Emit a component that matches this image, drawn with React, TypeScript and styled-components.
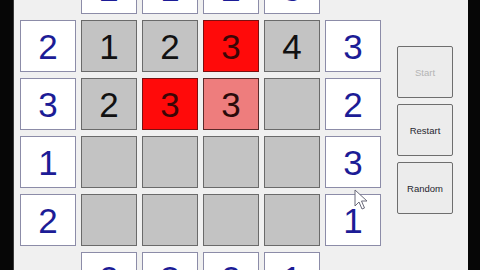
import styled, { createGlobalStyle } from "styled-components";

const GlobalStyle = createGlobalStyle`
  html, body {
    margin: 0;
    padding: 0;
    width: 480px;
    height: 270px;
    overflow: hidden;
    background: #060606;
  }
  * { box-sizing: border-box; }
`;

type Kind = "clue" | "gray" | "red" | "pink" | "empty";

const topClues = ["2", "1", "2", "3"];
const bottomClues = ["2", "3", "2", "1"];
const leftClues = ["2", "3", "1", "2"];
const rightClues = ["3", "2", "3", "1"];

const board: { v: string; k: Kind }[][] = [
  [
    { v: "1", k: "gray" },
    { v: "2", k: "gray" },
    { v: "3", k: "red" },
    { v: "4", k: "gray" },
  ],
  [
    { v: "2", k: "gray" },
    { v: "3", k: "red" },
    { v: "3", k: "pink" },
    { v: "", k: "gray" },
  ],
  [
    { v: "", k: "gray" },
    { v: "", k: "gray" },
    { v: "", k: "gray" },
    { v: "", k: "gray" },
  ],
  [
    { v: "", k: "gray" },
    { v: "", k: "gray" },
    { v: "", k: "gray" },
    { v: "", k: "gray" },
  ],
];

// video frame: dark pillars left and right, the form in between
const Page = styled.div`
  position: relative;
  width: 480px;
  height: 270px;
  overflow: hidden;
  background-color: #060606;
`;

const Form = styled.div`
  display: flex;
  align-items: flex-start;
  gap: 16px;
  width: 455px;
  height: 270px;
  margin-left: 13px;
  padding-left: 7px;
  background-color: #f0f0f0;
  border-left: 1px solid #3a3a3a;
  overflow: hidden;
`;

const Board = styled.div`
  display: grid;
  grid-template-columns: repeat(6, 56px);
  grid-template-rows: repeat(6, 52px);
  column-gap: 5px;
  row-gap: 6px;
  margin-top: -38px;
  margin-left: -1px;
`;

const bgFor: Record<Kind, string> = {
  clue: "#ffffff",
  gray: "#c3c3c3",
  red: "#ff0a0a",
  pink: "#ee7d7d",
  empty: "transparent",
};

const borderFor: Record<Kind, string> = {
  clue: "#8c8ca8",
  gray: "#6a6a6a",
  red: "#7a1010",
  pink: "#5a2a2a",
  empty: "transparent",
};

const colorFor: Record<Kind, string> = {
  clue: "#1c1c96",
  gray: "#111111",
  red: "#3c0606",
  pink: "#2a0a0a",
  empty: "transparent",
};

const Cell = styled.div<{ $kind: Kind }>`
  display: flex;
  align-items: center;
  justify-content: center;
  background: ${(p) => bgFor[p.$kind]};
  border: 1px solid ${(p) => borderFor[p.$kind]};
  color: ${(p) => colorFor[p.$kind]};
  font-family: "Liberation Sans", Arial, sans-serif;
  font-size: 35px;
  line-height: 1;
`;

const Buttons = styled.div`
  display: flex;
  flex-direction: column;
  gap: 6px;
  margin-top: 46px;
`;

const Button = styled.div<{ $disabled?: boolean }>`
  width: 56px;
  height: 52px;
  display: flex;
  align-items: center;
  justify-content: center;
  background: #ececec;
  border: 1px solid #6e6e6e;
  border-radius: 2px;
  color: ${(p) => (p.$disabled ? "#b4b4b4" : "#262630")};
  font-family: "Liberation Sans", Arial, sans-serif;
  font-size: 9.5px;
`;

const Cursor = styled.svg`
  position: absolute;
  left: 354px;
  top: 189px;
`;

export default function App() {
  const rows: { v: string; k: Kind }[][] = [];
  rows.push([
    { v: "", k: "empty" },
    ...topClues.map((v) => ({ v, k: "clue" as Kind })),
    { v: "", k: "empty" },
  ]);
  board.forEach((r, i) => {
    rows.push([{ v: leftClues[i], k: "clue" }, ...r, { v: rightClues[i], k: "clue" }]);
  });
  rows.push([
    { v: "", k: "empty" },
    ...bottomClues.map((v) => ({ v, k: "clue" as Kind })),
    { v: "", k: "empty" },
  ]);

  return (
    <>
      <GlobalStyle />
      <Page>
        <Form>
          <Board>
            {rows.map((r, i) =>
              r.map((c, j) => (
                <Cell key={`${i}-${j}`} $kind={c.k}>
                  {c.v}
                </Cell>
              ))
            )}
          </Board>
          <Buttons>
            <Button $disabled>Start</Button>
            <Button>Restart</Button>
            <Button>Random</Button>
          </Buttons>
        </Form>
        <Cursor width="14" height="22" viewBox="0 0 14 22">
          <path
            d="M1 1 L1 17 L5 13 L8 20 L10.5 19 L7.5 12 L13 12 Z"
            fill="#ffffff"
            stroke="#6a6a7a"
            strokeWidth="1"
            strokeLinejoin="round"
          />
        </Cursor>
      </Page>
    </>
  );
}
